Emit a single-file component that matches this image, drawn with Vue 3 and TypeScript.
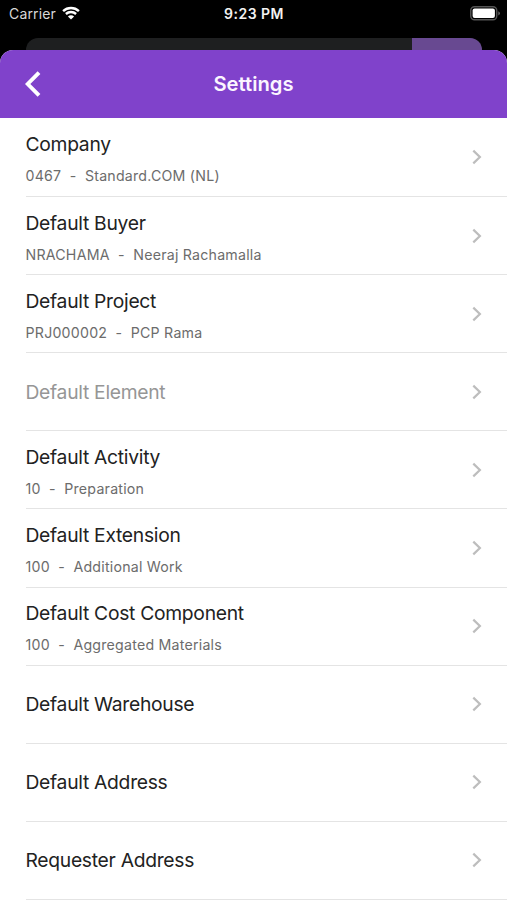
<script setup lang="ts">
interface Setting {
  label: string
  value?: string
  disabled?: boolean
}

const settings: Setting[] = [
  { label: 'Company', value: '0467  -  Standard.COM (NL)' },
  { label: 'Default Buyer', value: 'NRACHAMA  -  Neeraj Rachamalla' },
  { label: 'Default Project', value: 'PRJ000002  -  PCP Rama' },
  { label: 'Default Element', disabled: true },
  { label: 'Default Activity', value: '10  -  Preparation' },
  { label: 'Default Extension', value: '100  -  Additional Work' },
  { label: 'Default Cost Component', value: '100  -  Aggregated Materials' },
  { label: 'Default Warehouse' },
  { label: 'Default Address' },
  { label: 'Requester Address' },
]
</script>

<template>
  <div class="screen">
    <div class="status">
      <div class="carrier">
        <span>Carrier</span>
        <svg class="wifi" viewBox="0 0 18 14" width="18" height="14">
          <path d="M1.1 5.1C5.6.9 12.4.9 16.9 5.1" />
          <path d="M3.9 8C6.8 5.3 11.2 5.3 14.1 8" />
          <path class="dot" d="M9 13.5 5.9 10.4C7.6 8.9 10.4 8.9 12.1 10.4Z" />
        </svg>
      </div>
      <time class="clock">9:23 PM</time>
      <svg class="battery" viewBox="0 0 31 15" width="31" height="15">
        <rect class="case" x=".75" y=".75" width="26" height="13" rx="3.8" />
        <rect class="charge" x="2.6" y="2.6" width="22.3" height="9.3" rx="2" />
        <path class="cap" d="M28.3 5.2Q30 6 30 7.3 30 8.7 28.3 9.4Z" />
      </svg>
    </div>
    <div class="behind"><span class="behind-action"></span></div>
    <main class="sheet">
      <header class="bar">
        <button class="back" type="button" aria-label="Back">
          <svg viewBox="0 0 16 26" width="16" height="26"><path d="M14 1.6 2.7 13 14 24.4" /></svg>
        </button>
        <h1>Settings</h1>
      </header>
      <ul class="list">
        <li v-for="item in settings" :key="item.label" class="row" :class="{ disabled: item.disabled }">
          <div class="copy" :class="{ detailed: item.value }">
            <span class="label">{{ item.label }}</span>
            <span v-if="item.value" class="value">{{ item.value }}</span>
          </div>
          <svg class="chevron" viewBox="0 0 10 16" width="10" height="16"><path d="M1.3 1.6 7.9 8 1.3 14.4" /></svg>
        </li>
      </ul>
    </main>
  </div>
</template>

<style>
body {
  background: #000;
  overflow: hidden;
}
</style>

<style scoped>
.screen {
  width: 507px;
  height: 900px;
  display: flex;
  flex-direction: column;
  overflow: hidden;
  background: #000;
  color: #222;
  font-family: Inter, "Liberation Sans", sans-serif;
}
.status {
  height: 38px;
  flex: none;
  display: grid;
  grid-template-columns: 1fr auto 1fr;
  align-items: start;
  box-sizing: border-box;
  padding: 5px 6px 0 9px;
  color: #f2f2f2;
  font-size: 14px;
  line-height: 18px;
}
.carrier {
  display: flex;
  gap: 6px;
  color: #d8d8d8;
  letter-spacing: 0.15px;
}
.wifi {
  margin-top: 1px;
  fill: none;
  stroke: #fff;
  stroke-width: 2.4;
}
.wifi .dot {
  fill: #fff;
  stroke: none;
}
.clock {
  margin-right: 2px;
  font-weight: 600;
  font-size: 14px;
  letter-spacing: 0.5px;
}
.battery {
  justify-self: end;
  margin-top: 1px;
}
.case {
  fill: none;
  stroke: #555;
  stroke-width: 1.4;
}
.charge {
  fill: #fff;
}
.cap {
  fill: #666;
}
.behind {
  height: 24px;
  flex: none;
  margin: 0 25px 0 26px;
  display: flex;
  justify-content: flex-end;
  overflow: hidden;
  border-radius: 12px 12px 0 0;
  background: #1e1f20;
}
.behind-action {
  width: 70px;
  background: #684991;
}
.sheet {
  position: relative;
  margin-top: -12px;
  flex: 1 0 auto;
  overflow: hidden;
  border-radius: 13px 13px 0 0;
  background: #fff;
}
.bar {
  height: 68.4px;
  display: grid;
  grid-template-columns: 80px 1fr 80px;
  align-items: center;
  background: #8042cb;
}
.back {
  display: flex;
  margin: 0;
  padding: 0 0 0 25px;
  border: 0;
  background: none;
}
.back svg {
  fill: none;
  stroke: #fff;
  stroke-width: 3.9;
}
h1 {
  margin: 0;
  text-align: center;
  color: #fbf5ff;
  font-size: 20.2px;
  font-weight: 600;
  line-height: 24px;
}
.list {
  margin: 0;
  padding: 0.5px 0 0 25.5px;
  list-style: none;
}
.row {
  height: 78.12px;
  display: flex;
  align-items: center;
  justify-content: space-between;
  box-sizing: border-box;
  padding-right: 25px;
  border-bottom: 1px solid #e4e4e4;
}
.copy {
  display: flex;
  flex-direction: column;
  gap: 11px;
}
.detailed {
  padding-top: 3px;
}
.label {
  font-size: 19.3px;
  line-height: 24px;
  letter-spacing: -0.29px;
}
.value {
  color: #6c6c6c;
  font-size: 14.2px;
  line-height: 18px;
  letter-spacing: 0.22px;
  white-space: pre;
}
.disabled .label {
  color: #969696;
}
.chevron {
  fill: none;
  stroke: #bdbdbd;
  stroke-width: 2.2;
}
</style>
